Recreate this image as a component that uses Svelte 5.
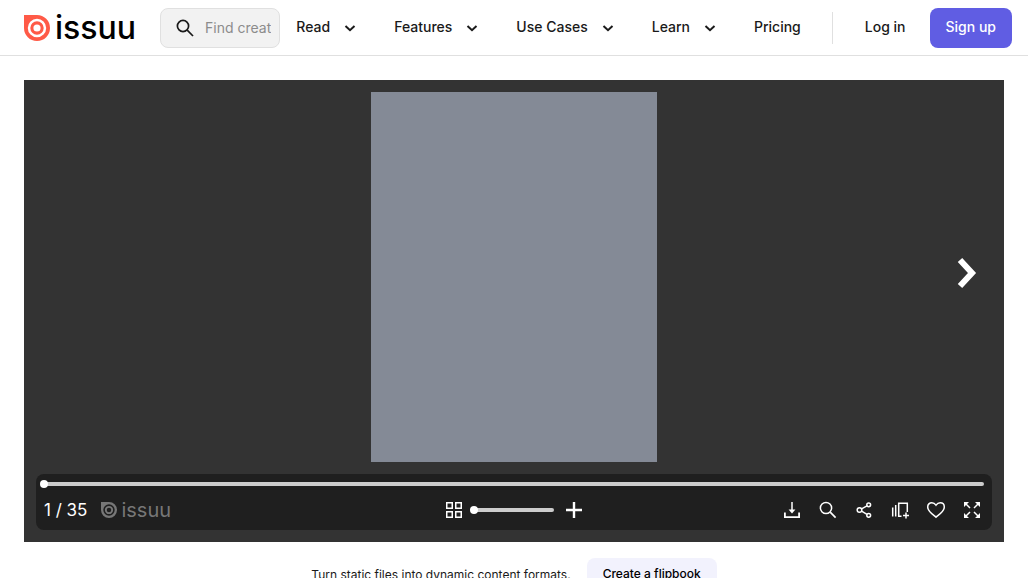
<script>
  const menus = ['Read', 'Features', 'Use Cases', 'Learn'];

  let query = $state('');
  let page = $state(1);
  let zoom = $state(0);
  const pageCount = 35;

  const actions = ['Download', 'Search', 'Share', 'Add to stack', 'Like', 'Fullscreen'];

  function nextPage() {
    if (page < pageCount) page += 1;
  }
</script>

{#snippet mark()}
  <svg class="mark" viewBox="0 0 26 26" aria-hidden="true">
    <path
      fill="currentColor"
      fill-rule="evenodd"
      d="M0 0H13A13 13 0 1 1 0 13ZM13 3.800A9.200 9.200 0 1 0 13 22.200A9.200 9.200 0 1 0 13 3.800ZM13 6.300A6.700 6.700 0 1 1 13 19.700A6.700 6.700 0 1 1 13 6.300ZM13 9.400A3.600 3.600 0 1 0 13 16.600A3.600 3.600 0 1 0 13 9.400Z"
    />
  </svg>
{/snippet}

<header>
  <a class="logo" href="/" aria-label="issuu">
    {@render mark()}
    <span>issuu</span>
  </a>

  <label class="search">
    <svg viewBox="0 0 24 24" aria-hidden="true">
      <circle cx="10" cy="10" r="5.6" />
      <path d="M14.200 14.200L20 20" />
    </svg>
    <input type="text" placeholder="Find creative content" aria-label="Find creative content" bind:value={query} />
  </label>

  <nav>
    {#each menus as menu}
      <button class="menu">
        {menu}
        <svg viewBox="0 0 24 24" aria-hidden="true">
          <path d="M7.500 10L12 14.200L16.500 10" />
        </svg>
      </button>
    {/each}
    <a class="menu" href="/pricing">Pricing</a>
  </nav>

  <div class="account">
    <a class="login" href="/signin">Log in</a>
    <a class="signup" href="/signup">Sign up</a>
  </div>
</header>

<main>
  <section class="reader">
    <div class="page"></div>

    <button class="next" aria-label="Next page" onclick={nextPage}>
      <svg viewBox="0 0 24 36" aria-hidden="true">
        <path d="M4 5L16 18L4 31" />
      </svg>
    </button>

    <div class="toolbar">
      <input class="seek" type="range" min="1" max={pageCount} bind:value={page} aria-label="Page" />
      <div class="controls">
        <div class="left">
          <span class="count">{page} / {pageCount}</span>
          <a class="logo small" href="/" aria-label="issuu">
            {@render mark()}
            <span>issuu</span>
          </a>
        </div>

        <div class="zoom">
          <button aria-label="Show all pages">
            <svg viewBox="0 0 24 24" aria-hidden="true">
              <path stroke-width="1.5" d="M4.750 4.750h5.500v5.500h-5.500zM13.750 4.750h5.500v5.500h-5.500zM4.750 13.750h5.500v5.500h-5.500zM13.750 13.750h5.500v5.500h-5.500z" />
            </svg>
          </button>
          <input type="range" min="0" max="100" bind:value={zoom} aria-label="Zoom" />
          <button aria-label="Zoom in" onclick={() => (zoom = Math.min(100, zoom + 10))}>
            <svg viewBox="0 0 24 24" aria-hidden="true">
              <path stroke-width="2.4" d="M12 4V20M4 12H20" />
            </svg>
          </button>
        </div>

        <div class="actions">
          {#each actions as action}
            <button aria-label={action}>
              <svg viewBox="0 0 24 24" aria-hidden="true">
                {#if action === 'Download'}
                  <path stroke-width="1.8" d="M4.900 14.500V19.100H19.100V14.500" />
                  <path stroke-width="1.500" d="M12 4V14" />
                  <path class="solid" d="M8.600 11.500H15.400L12 15.500Z" />
                {:else if action === 'Search'}
                  <circle cx="10" cy="10" r="5.600" />
                  <path stroke-width="1.700" d="M14.200 14.200L19.600 19.600" />
                {:else if action === 'Share'}
                  <circle cx="7.500" cy="12" r="2.300" />
                  <circle cx="16.700" cy="6.800" r="1.900" />
                  <circle cx="16.700" cy="17.300" r="1.900" />
                  <path d="M9.600 10.900L15 7.800M9.600 13.100L15 16.300" />
                {:else if action === 'Add to stack'}
                  <path d="M4.700 9.500V18.500M7.700 7V18.500M13.500 18.200H10.700V5.200H19.300V14" />
                  <path d="M18 14.500V20.500M15 17.500H21" />
                {:else if action === 'Like'}
                  <path d="M12 19.200C10.500 17.700 3.700 13.800 3.700 8.900C3.700 6.400 5.500 4.700 7.800 4.700C9.700 4.700 11 5.700 12 7.100C13 5.700 14.300 4.700 16.200 4.700C18.500 4.700 20.300 6.400 20.300 8.900C20.300 13.800 13.500 17.700 12 19.200Z" />
                {:else}
                  <path d="M6 6L10 10M18 6L14 10M6 18L10 14M18 18L14 14" />
                  <path class="solid" d="M4 4H9L4 9ZM20 4V9L15 4ZM4 20V15L9 20ZM20 20H15L20 15Z" />
                {/if}
              </svg>
            </button>
          {/each}
        </div>
      </div>
    </div>
  </section>

  <div class="promo">
    <p>Turn static files into dynamic content formats.</p>
    <a href="/flipbook">Create a flipbook</a>
  </div>
</main>

<style>
  :global(body) {
    margin: 0;
    background: #fff;
    color: #1a1a1a;
    font-family: Inter, 'Liberation Sans', sans-serif;
    font-size: 14px;
    line-height: 20px;
  }

  :global(html) {
    overflow: hidden;
  }

  a {
    color: inherit;
    text-decoration: none;
  }

  button {
    padding: 0;
    border: none;
    background: none;
    color: inherit;
    font: inherit;
    cursor: pointer;
  }

  svg {
    display: block;
    flex: none;
    width: 24px;
    height: 24px;
    fill: none;
    stroke: currentColor;
    stroke-width: 1.5;
  }

  header {
    display: flex;
    align-items: center;
    padding: 8px 16px 7px 24px;
    border-bottom: 1px solid #e0e0e0;
  }

  .logo {
    display: flex;
    align-items: center;
    gap: 5px;
    color: #ff5a47;
  }

  .logo .mark {
    width: 26px;
    height: 26px;
    stroke: none;
  }

  .logo span {
    color: #000;
    font-size: 32px;
    font-weight: 500;
    line-height: 32px;
  }

  .search {
    display: flex;
    flex: 1;
    align-items: center;
    gap: 8px;
    min-width: 0;
    height: 40px;
    margin-left: 24px;
    padding: 0 8px 0 12px;
    box-sizing: border-box;
    border: 1px solid #e0e0e0;
    border-radius: 8px;
    background: #f2f2f2;
  }

  .search svg {
    stroke-width: 1.7;
  }

  .search input {
    width: 100%;
    min-width: 0;
    padding: 0;
    border: none;
    outline: none;
    background: none;
    color: inherit;
    font: inherit;
  }

  .search input::placeholder {
    color: #8c8c8c;
  }

  nav {
    display: flex;
  }

  .menu {
    display: flex;
    align-items: center;
    gap: 8px;
    padding: 0 16px 2px;
    font-weight: 500;
    white-space: nowrap;
  }

  .menu svg {
    margin-top: 2px;
    stroke-width: 2;
  }

  a.menu {
    padding-right: 31px;
  }

  .account {
    display: flex;
    align-items: center;
    gap: 24px;
    font-weight: 500;
    white-space: nowrap;
  }

  .login {
    padding: 5px 0 7px 32px;
    border-left: 1px solid #e0e0e0;
  }

  .signup {
    padding: 9px 16px 11px;
    border-radius: 8px;
    background: #605de3;
    color: #fff;
  }

  main {
    padding: 24px 24px 0;
  }

  .reader {
    position: relative;
    display: flex;
    flex-direction: column;
    align-items: center;
    gap: 12px;
    padding: 12px;
    background: #333;
    color: #fff;
  }

  .page {
    width: 286px;
    height: 370px;
    background: #848a96;
  }

  .next {
    position: absolute;
    top: 175px;
    right: 24px;
  }

  .next svg {
    width: 24px;
    height: 36px;
    stroke-width: 6;
  }

  .toolbar {
    width: 100%;
    padding: 8px;
    box-sizing: border-box;
    border-radius: 8px;
    background: #1f1f1f;
  }

  input[type='range'] {
    appearance: none;
    display: block;
    width: 80px;
    height: 4px;
    margin: 0;
    border-radius: 2px;
    background: #ccc;
  }

  input[type='range']::-webkit-slider-thumb {
    appearance: none;
    width: 8px;
    height: 8px;
    margin-left: -4px;
    border-radius: 50%;
    background: #fff;
  }

  input.seek {
    width: 100%;
  }

  .controls {
    display: grid;
    grid-template-columns: 1fr auto 1fr;
    align-items: center;
    height: 36px;
    padding-top: 4px;
    box-sizing: border-box;
    margin-top: 4px;
    margin-bottom: -4px;
  }

  .left,
  .zoom,
  .actions {
    display: flex;
    align-items: center;
  }

  .left {
    gap: 14px;
  }

  .zoom {
    gap: 8px;
  }

  .actions {
    justify-content: flex-end;
    gap: 12px;
  }

  .count {
    font-size: 17px;
  }

  .small {
    gap: 4px;
    color: #777;
  }

  .small .mark {
    width: 16px;
    height: 16px;
  }

  .small span {
    color: inherit;
    font-size: 20px;
    font-weight: 400;
    line-height: 20px;
  }

  .solid {
    fill: currentColor;
    stroke: none;
  }

  .promo {
    display: flex;
    align-items: center;
    justify-content: center;
    gap: 16px;
    padding: 16px 0;
    font-size: 12px;
    line-height: 16px;
  }

  .promo p {
    margin: 0;
    padding-top: 2px;
  }

  .promo a {
    padding: 8px 16px;
    border-radius: 8px;
    background: #f2f2fd;
    color: #000;
    font-weight: 500;
  }
</style>
